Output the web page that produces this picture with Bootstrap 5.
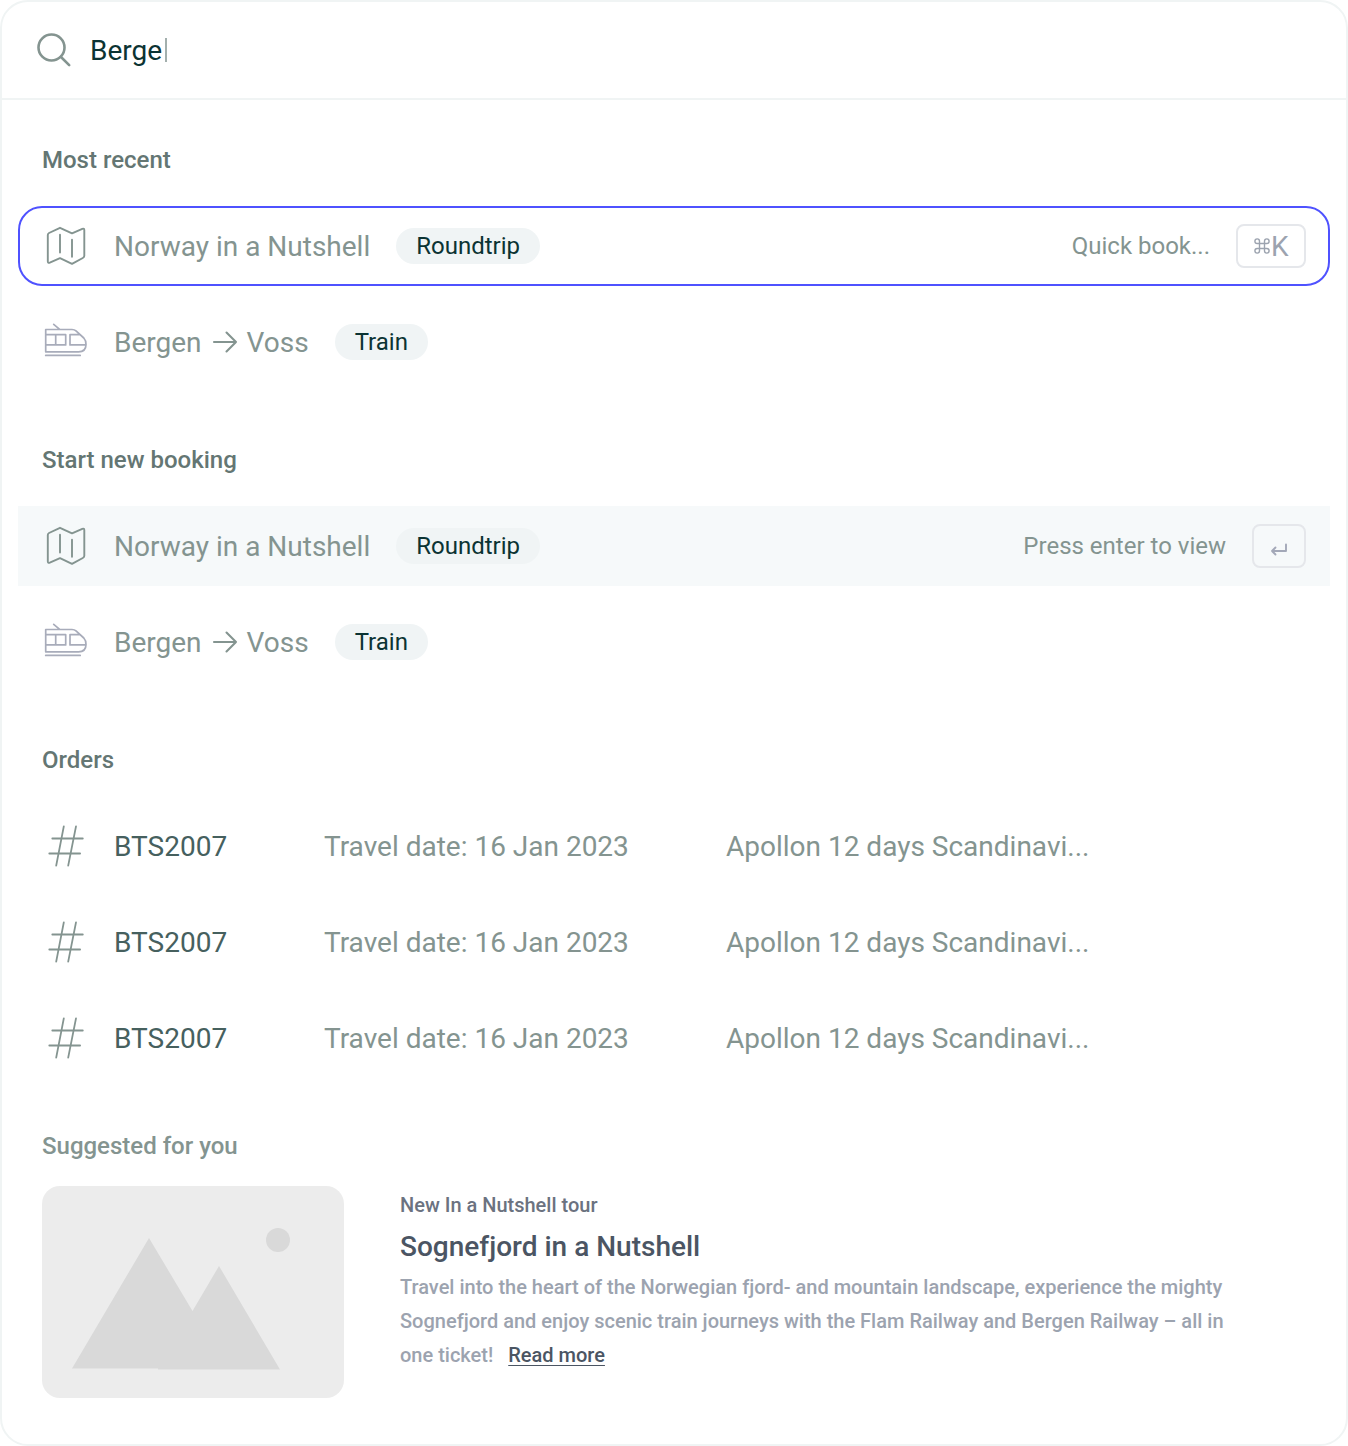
<!DOCTYPE html>
<html lang="en">
<head>
<meta charset="utf-8">
<meta name="viewport" content="width=device-width, initial-scale=1">
<title>Search bookings</title>
<link href="https://cdn.jsdelivr.net/npm/bootstrap@5.3.0/dist/css/bootstrap.min.css" rel="stylesheet">
<style>
body{font-family:Roboto,"Liberation Sans",sans-serif;background:#fff;color:#849490;font-size:28px;line-height:40px}
svg{flex:none;display:block;fill:none;stroke-linecap:round;stroke-linejoin:round}
.palette{height:1446px;border:2px solid #f0f4f4;border-radius:28px;overflow:hidden;background:#fff}
.searchbar{height:98px;border-bottom:2px solid #f0f4f4;padding-left:34px}
.query{color:#0b3333;margin-left:18px;padding-top:2px}
.caret{width:2px;height:24px;background:#a3afad;margin-left:2.500px}
.results{padding:46px 16px 0}
.heading{font-size:24px;line-height:28px;font-weight:500;color:#647673;margin:0 24px 32px}
.heading-soft{color:#849490;margin-bottom:26px}
.group{margin-bottom:64px}
.group-orders{margin-bottom:54px}
.entry{height:80px;padding:0 24px}
.entry.active{border:2px solid #4f52ff;border-radius:24px;padding:0 22px}
.entry.hovered{background:#f6f9fa}
.entry-name{margin-left:24px;padding-top:2px}
.route-arrow{margin:0 9px 2px 10px}
.tag{font-size:24px;line-height:36px;color:#0b3333;background:#f0f4f5;padding:0 20px;margin-left:26px}
.hint{font-size:24px;margin-right:26px}
.keycap{height:44px;border:2px solid #e5e7eb;border-radius:8px;color:#9ca3af}
.key-cmd{width:70px;padding-left:15px}
.key-enter{width:54px}
.key-letter{padding-top:2px}
.order-id,.order-date,.order-title{padding-top:2px}
.order-id{color:#46605e;width:210px;margin-left:24px}
.order-date{width:402px}
.thumb{border-radius:18px}
.suggest{padding:0 24px}
.blurb{margin-left:56px;width:850px;font-size:20px;font-weight:500;color:#9ca3af}
.kicker{color:#6b7280;line-height:24px;padding-top:7px}
.tour{font-size:28px;line-height:36px;font-weight:500;color:#4b5563;margin:12px 0 5px}
.copy{line-height:34px}
.copy a{color:#4b5563;margin-left:10px;text-underline-offset:3px;text-decoration-thickness:1px}
</style>
<script src="https://cdn.jsdelivr.net/npm/bootstrap@5.3.0/dist/js/bootstrap.bundle.min.js"></script>
</head>
<body>
<svg width="0" height="0" class="position-absolute" aria-hidden="true">
<symbol id="map" viewBox="0 0 48 48"><path d="M7 11 18 5.800l12 5.600 10.300-4.600q2-.7 2 1.400v25.600q0 1.500-1.500 2.200L30 41.800l-12-5.600L7.800 40.700q-2 .7-2-1.400V13q0-1.400 1.200-2ZM18 12.800v17.700M30 17.700v17" stroke="#849490" stroke-width="1.900"/></symbol>
<symbol id="train" viewBox="0 0 48 48"><path d="M11.700 6.300 17.700 11.300M3.700 11.500H30q2.500 0 4 1.400l7.800 7.100q2.200 2.300 2.200 6.500 0 7.300-7.500 7.300H3.700zM3.700 16.700h20v10.200h-20M13.700 16.700v10.200M37.500 16.700H28v10.200h15.800M3.700 37.400h34.500" stroke="#a8acba" stroke-width="1.700"/></symbol>
<symbol id="hash" viewBox="0 0 48 48"><path d="M21.800 4.300 14.200 43.700M34 4.300l-7.800 39.400M10.300 16.500h30.500M7.300 31.500h30.800" stroke="#849490" stroke-width="1.800"/></symbol>
<symbol id="arrow" viewBox="0 0 26 24"><path d="M2 12h22M14.500 2.500l9.500 9.500-9.500 9.500" stroke="#849490" stroke-width="2.100"/></symbol>
</svg>
<main class="palette">
<div class="searchbar d-flex align-items-center">
<svg width="36" height="36" viewBox="0 0 36 36"><circle cx="15.500" cy="15.500" r="13" stroke="#849490" stroke-width="2.600"/><path d="m25 25 8.200 8.200" stroke="#849490" stroke-width="2.600"/></svg>
<span class="query">Berge</span><span class="caret"></span>
</div>
<div class="results">
<section class="group">
<h2 class="heading">Most recent</h2>
<div class="d-flex flex-column gap-3">
<div class="entry active d-flex align-items-center"><svg width="48" height="48"><use href="#map"/></svg><span class="entry-name">Norway in a Nutshell</span><span class="tag rounded-pill">Roundtrip</span><span class="hint ms-auto">Quick book...</span><span class="keycap key-cmd d-flex align-items-center"><svg width="18" height="18" viewBox="0 0 18 18"><path d="M6.500 6.500h5v5h-5zM6.500 6.500H4.200a2.300 2.300 0 1 1 2.300-2.300zM11.500 6.500V4.200a2.300 2.300 0 1 1 2.300 2.300zM11.500 11.500h2.300a2.300 2.300 0 1 1-2.300 2.300zM6.500 11.500v2.300a2.300 2.300 0 1 1-2.300-2.300z" stroke="#9ca3af" stroke-width="1.400"/></svg><span class="key-letter">K</span></span></div>
<div class="entry d-flex align-items-center"><svg width="48" height="48"><use href="#train"/></svg><span class="entry-name d-flex align-items-center">Bergen<svg class="route-arrow" width="26" height="24"><use href="#arrow"/></svg>Voss</span><span class="tag rounded-pill">Train</span></div>
</div>
</section>
<section class="group">
<h2 class="heading">Start new booking</h2>
<div class="d-flex flex-column gap-3">
<div class="entry hovered d-flex align-items-center"><svg width="48" height="48"><use href="#map"/></svg><span class="entry-name">Norway in a Nutshell</span><span class="tag rounded-pill">Roundtrip</span><span class="hint ms-auto">Press enter to view</span><span class="keycap key-enter d-flex align-items-center justify-content-center"><svg class="mt-2" width="18" height="14" viewBox="0 0 18 14"><path d="M16 1.500v6.500H2M5.500 4.500 2 8l3.500 3.500" stroke="#a3a8b8" stroke-width="1.900"/></svg></span></div>
<div class="entry d-flex align-items-center"><svg width="48" height="48"><use href="#train"/></svg><span class="entry-name d-flex align-items-center">Bergen<svg class="route-arrow" width="26" height="24"><use href="#arrow"/></svg>Voss</span><span class="tag rounded-pill">Train</span></div>
</div>
</section>
<section class="group-orders">
<h2 class="heading">Orders</h2>
<div class="d-flex flex-column gap-3">
<div class="entry d-flex align-items-center"><svg width="48" height="48"><use href="#hash"/></svg><span class="order-id">BTS2007</span><span class="order-date">Travel date: 16 Jan 2023</span><span class="order-title">Apollon 12 days Scandinavi...</span></div>
<div class="entry d-flex align-items-center"><svg width="48" height="48"><use href="#hash"/></svg><span class="order-id">BTS2007</span><span class="order-date">Travel date: 16 Jan 2023</span><span class="order-title">Apollon 12 days Scandinavi...</span></div>
<div class="entry d-flex align-items-center"><svg width="48" height="48"><use href="#hash"/></svg><span class="order-id">BTS2007</span><span class="order-date">Travel date: 16 Jan 2023</span><span class="order-title">Apollon 12 days Scandinavi...</span></div>
</div>
</section>
<section>
<h2 class="heading heading-soft">Suggested for you</h2>
<div class="suggest d-flex">
<svg class="thumb" width="302" height="212" viewBox="0 0 302 212"><path fill="#ececec" d="M0 0h302v212H0z"/><path fill="#d9d9d9" d="M107 52 30 182.500h86v1h122L177 80l-26.500 45z"/><circle cx="236" cy="54" r="12" fill="#d9d9d9"/></svg>
<div class="blurb"><div class="kicker">New In a Nutshell tour</div><h3 class="tour">Sognefjord in a Nutshell</h3><p class="copy mb-0">Travel into the heart of the Norwegian fjord- and mountain landscape, experience the mighty<br>Sognefjord and enjoy scenic train journeys with the Flam Railway and Bergen Railway – all in<br>one ticket! <a href="#">Read more</a></p></div>
</div>
</section>
</div>
</main>
</body>
</html>
